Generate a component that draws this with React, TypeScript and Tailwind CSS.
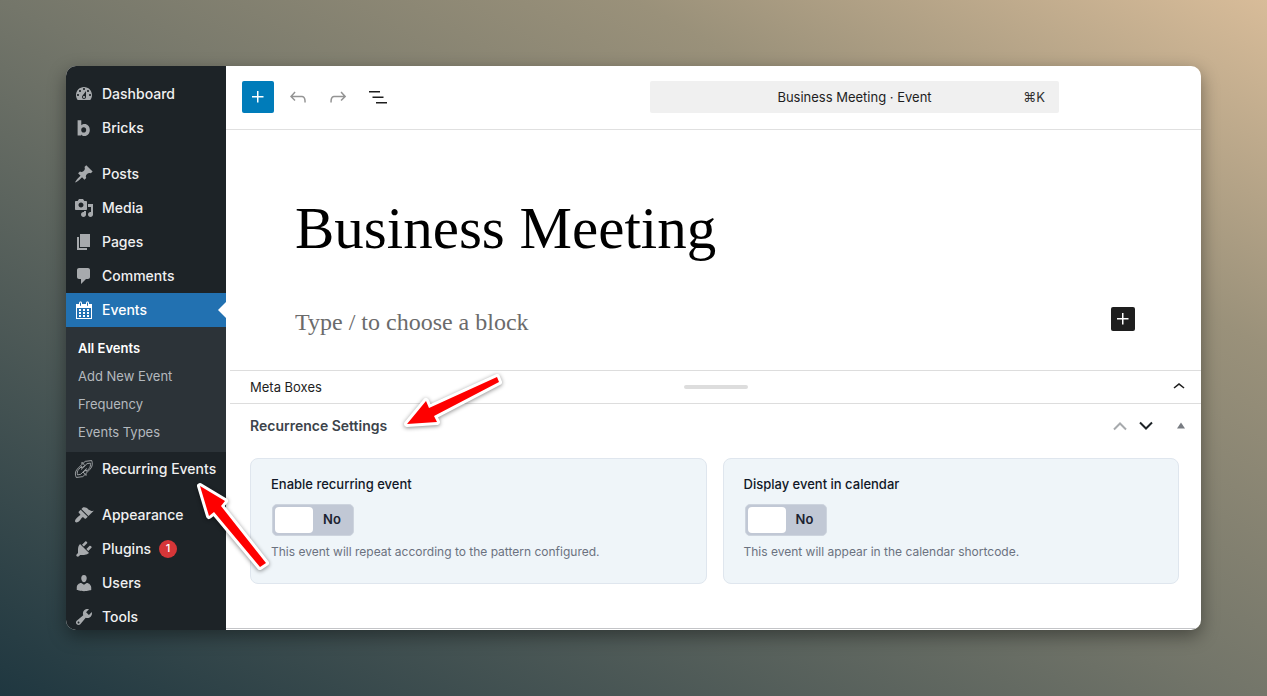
import React, { useState } from 'react';

const ICONS = {
  dashboard:
    'M3.76 16h12.48c1.1-1.37 1.76-3.11 1.76-5 0-4.42-3.58-8-8-8s-8 3.58-8 8c0 1.89.66 3.63 1.76 5zM10 4c.55 0 1 .45 1 1s-.45 1-1 1-1-.45-1-1 .45-1 1-1zM6 6c.55 0 1 .45 1 1s-.45 1-1 1-1-.45-1-1 .45-1 1-1zm8 0c.55 0 1 .45 1 1s-.45 1-1 1-1-.45-1-1 .45-1 1-1zm-5.37 5.55L12 7v6c0 1.1-.9 2-2 2s-2-.9-2-2c0-.57.24-1.08.63-1.45zM4 10c.55 0 1 .45 1 1s-.45 1-1 1-1-.45-1-1 .45-1 1-1zm12 0c.55 0 1 .45 1 1s-.45 1-1 1-1-.45-1-1 .45-1 1-1zm-5 3c0-.55-.45-1-1-1s-1 .45-1 1 .45 1 1 1 1-.45 1-1z',
  bricks:
    'M3.6 2.2h3.7v5.1c.9-.9 2-1.3 3.2-1.3 3.1 0 5.3 2.5 5.3 5.9s-2.2 6-5.3 6c-1.3 0-2.5-.5-3.4-1.5v1.2H3.6zM9.7 9.3c-1.4 0-2.5 1.1-2.5 2.6s1.1 2.7 2.5 2.7 2.5-1.2 2.5-2.7-1.1-2.6-2.5-2.6z',
  posts:
    'M10.44 3.02l1.82-1.82 6.36 6.35-1.83 1.82c-1.05-.68-2.48-.57-3.41.36l-.75.75c-.92.93-1.04 2.35-.35 3.41l-1.83 1.82-2.41-2.41-2.8 2.79c-.42.42-3.38 2.71-3.8 2.29s1.86-3.39 2.28-3.81l2.79-2.79L4.1 9.36l1.83-1.82c1.05.69 2.48.57 3.4-.36l.75-.75c.93-.92 1.05-2.35.36-3.41z',
  media:
    'M13 11V4c0-.55-.45-1-1-1h-1.67L9 1H5L3.67 3H2c-.55 0-1 .45-1 1v7c0 .55.45 1 1 1h10c.55 0 1-.45 1-1zM7 4.5c1.38 0 2.5 1.12 2.5 2.5S8.38 9.5 7 9.5 4.5 8.38 4.5 7 5.62 4.5 7 4.5zM14 6h5v10.5c0 1.38-1.12 2.5-2.5 2.5S14 17.88 14 16.5s1.12-2.5 2.5-2.5c.17 0 .34.02.5.05V9h-3V6zm-4 8.05V13h2v3.5c0 1.38-1.12 2.5-2.5 2.5S7 17.88 7 16.5 8.12 14 9.5 14c.17 0 .34.02.5.05z',
  pages: 'M6 15V2h10v13H6zm-1 1h8v2H3V5h2v11z',
  comments:
    'M5 2h9c1.1 0 2 .9 2 2v7c0 1.1-.9 2-2 2h-2l-5 5v-5H5c-1.1 0-2-.9-2-2V4c0-1.1.9-2 2-2z',
  events:
    'M15 4h3v15H2V4h3V3c0-.41.15-.76.44-1.06.29-.29.65-.44 1.06-.44s.77.15 1.06.44c.29.3.44.65.44 1.06v1h4V3c0-.41.15-.76.44-1.06.29-.29.65-.44 1.06-.44s.77.15 1.06.44c.29.3.44.65.44 1.06v1zM6 3v2.5c0 .14.05.26.15.36.09.09.21.14.35.14s.26-.05.35-.14c.1-.1.15-.22.15-.36V3c0-.14-.05-.26-.15-.35-.09-.1-.21-.15-.35-.15s-.26.05-.35.15c-.1.09-.15.21-.15.35zm7 0v2.5c0 .14.05.26.14.36.1.09.22.14.36.14s.26-.05.36-.14c.09-.1.14-.22.14-.36V3c0-.14-.05-.26-.14-.35-.1-.1-.22-.15-.36-.15s-.26.05-.36.15c-.09.09-.14.21-.14.35zm4 15V8H3v10h14zM7 9v2H5V9h2zm2 0h2v2H9V9zm4 2V9h2v2h-2zm-6 1v2H5v-2h2zm2 0h2v2H9v-2zm4 2v-2h2v2h-2zm-6 1v2H5v-2h2zm4 2H9v-2h2v2zm4 0h-2v-2h2v2z',
  appearance:
    'M14.48 11.06L7.41 3.99l1.5-1.5c.5-.56 2.3-.47 3.51.32 1.21.8 1.43 1.28 2.91 2.1 1.18.64 2.45 1.26 4.45.85zm-.71.71L6.7 4.7 4.93 6.47c-.39.39-.39 1.02 0 1.41l1.06 1.06c.39.39.39 1.03 0 1.42-.6.6-1.43 1.11-2.21 1.69-.35.26-.7.53-1.01.84C1.43 14.23.4 16.08 1.4 17.07c.99 1 2.84-.03 4.18-1.36.31-.31.58-.66.85-1.02.57-.78 1.08-1.61 1.69-2.21.39-.39 1.02-.39 1.41 0l1.06 1.06c.39.39 1.02.39 1.41 0z',
  plugins:
    'M13.11 4.36L9.87 7.6 8 5.73l3.24-3.24c.35-.34 1.05-.2 1.56.32.52.51.66 1.21.31 1.55zm-8 1.77l.91-1.12 9.01 9.01-1.19.84c-.71.71-2.63 1.16-3.82 1.16H6.14L4.9 17.26c-.59.59-1.54.59-2.12 0-.59-.58-.59-1.53 0-2.12l1.24-1.24v-3.88c0-1.13.4-3.19 1.09-3.89zm7.26 3.97l3.24-3.24c.34-.35 1.04-.21 1.55.31.52.51.66 1.21.31 1.55l-3.24 3.25z',
  users:
    'M10 9.25c-2.27 0-2.73-3.44-2.73-3.44C7 4.02 7.82 2 9.97 2c2.16 0 2.98 2.02 2.71 3.81 0 0-.41 3.44-2.68 3.44zm0 2.57L12.72 10c2.39 0 4.52 2.33 4.52 4.53v2.49s-3.65 1.13-7.24 1.13c-3.65 0-7.24-1.13-7.24-1.13v-2.49c0-2.25 1.94-4.48 4.47-4.48z',
  tools:
    'M16.68 9.77c-1.34 1.34-3.3 1.67-4.95.99l-5.41 6.52c-.99.99-2.59.99-3.58 0s-.99-2.59 0-3.57l6.52-5.42c-.68-1.65-.35-3.61.99-4.95 1.28-1.28 3.12-1.62 4.72-1.06l-2.89 2.89 2.82 2.82 2.86-2.87c.53 1.58.18 3.39-1.08 4.65zM3.81 16.21c.4.39 1.04.39 1.43 0 .4-.4.4-1.04 0-1.43-.39-.4-1.03-.4-1.43 0-.39.39-.39 1.03 0 1.43z',
};

type IconName = keyof typeof ICONS;

interface MenuItemProps {
  label: string;
  icon?: IconName;
  active?: boolean;
  badge?: number;
}

function MenuItem({ label, icon, active, badge }: MenuItemProps) {
  return (
    <li>
      <a
        href="#"
        className={`relative flex h-[34px] items-center gap-2 px-2 text-sm font-medium whitespace-nowrap ${
          active ? 'bg-[#2271b1] text-white' : 'text-[#f0f0f1]'
        }`}
      >
        {icon ? (
          <svg
            viewBox="0 0 20 20"
            fillRule="evenodd"
            className={`size-5 shrink-0 ${active ? 'fill-white' : 'fill-[#a7aaad]'}`}
          >
            <path d={ICONS[icon]} />
          </svg>
        ) : (
          <RecurringIcon />
        )}
        {label}
        {badge && (
          <span className="flex size-[18px] items-center justify-center rounded-full bg-[#d63638] text-[11px] text-white">
            {badge}
          </span>
        )}
        {active && (
          <span className="absolute top-1/2 right-0 -translate-y-1/2 border-y-8 border-r-8 border-y-transparent border-r-white" />
        )}
      </a>
    </li>
  );
}

function RecurringIcon() {
  return (
    <svg viewBox="0 0 20 20" className="size-5 shrink-0 fill-none stroke-[#a7aaad]" strokeWidth="0.9" strokeLinejoin="round">
      <path d="M11.2 2.4 17.7 1.5c1 2.7.9 6.1-1.5 8.6l-4 4.1-.2 2.3-2.9-3.5 3.4-2.1-.1 1.5 2.4-2.5c1.5-1.7 2-3.6 1.5-5.8l-3.3.6-6 5.9" />
      <path d="M8.8 17.6 2.3 18.5c-1.5-3-1.2-6.1 1-8.4l4.5-4.6.2-2.3 2.9 3.5-3.4 2.3.1-1.7-3 3.2c-1.3 1.5-1.6 3.3-1.1 5.4l3.2-.6 5.9-6" />
      <path d="M11.2 2.4 8.4 5M8.800 17.600l2.800-2.600" />
    </svg>
  );
}

const SUBMENU = ['All Events', 'Add New Event', 'Frequency', 'Events Types'];

function Sidebar() {
  return (
    <nav className="w-40 shrink-0 overflow-hidden bg-[#1d2327] pt-[11px]">
      <ul>
        <MenuItem icon="dashboard" label="Dashboard" />
        <MenuItem icon="bricks" label="Bricks" />
      </ul>
      <ul className="mt-3">
        <MenuItem icon="posts" label="Posts" />
        <MenuItem icon="media" label="Media" />
        <MenuItem icon="pages" label="Pages" />
        <MenuItem icon="comments" label="Comments" />
        <MenuItem icon="events" label="Events" active />
        <li>
          <ul className="bg-[#2c3338] pt-2 pb-[5px]">
            {SUBMENU.map((item, i) => (
              <li key={item}>
                <a
                  href="#"
                  className={`flex h-7 items-center px-3 text-[13px] ${
                    i === 0 ? 'font-semibold text-white' : 'text-[#b4b9be]'
                  }`}
                >
                  {item}
                </a>
              </li>
            ))}
          </ul>
        </li>
        <MenuItem label="Recurring Events" />
      </ul>
      <ul className="mt-3">
        <MenuItem icon="appearance" label="Appearance" />
        <MenuItem icon="plugins" label="Plugins" badge={1} />
        <MenuItem icon="users" label="Users" />
        <MenuItem icon="tools" label="Tools" />
      </ul>
    </nav>
  );
}

function ToolbarIcon({ d }: { d: string }) {
  return (
    <svg viewBox="0 0 24 24" className="size-6 fill-current">
      <path d={d} />
    </svg>
  );
}

const PLUS = 'M11 12.5V17.5H12.5V12.5H17.5V11H12.5V6H11V11H6V12.5H11Z';

function EditorHeader() {
  return (
    <header className="flex h-16 shrink-0 items-center gap-2 border-b border-[#e0e0e0] pr-[142px] pb-px pl-4">
      <button aria-label="Add block" className="flex size-8 items-center justify-center rounded-xs bg-[#007cba] text-white">
        <ToolbarIcon d={PLUS} />
      </button>
      <button aria-label="Undo" className="flex size-8 items-center justify-center text-[#949494]">
        <ToolbarIcon d="M18.3 11.7c-.6-.6-1.4-.9-2.3-.9H6.7l2.9-3.3-1.1-1-4.5 5L8.5 16l1-1-2.7-2.7H16c.5 0 .9.2 1.3.5 1 1 1 3.4 1 4.5v.3h1.5v-.2c0-1.5 0-4.3-1.5-5.7z" />
      </button>
      <button aria-label="Redo" className="flex size-8 items-center justify-center text-[#949494]">
        <ToolbarIcon d="M15.6 6.5l-1.1 1 2.9 3.3H8c-.9 0-1.7.3-2.3.9-1.4 1.5-1.4 4.2-1.4 5.6v.2h1.5v-.3c0-1.1 0-3.5 1-4.5.3-.3.7-.5 1.3-.5h9.2L14.5 15l1.1 1.1 4.6-4.6-4.6-5z" />
      </button>
      <button aria-label="Document overview" className="flex size-8 items-center justify-center text-[#1e1e1e]">
        <ToolbarIcon d="M3 6h11v1.5H3V6Zm3.5 5.5h11V13h-11v-1.5ZM21 17H10v1.5h11V17Z" />
      </button>
      <button className="ml-auto grid h-8 w-full max-w-[409px] grid-cols-[1fr_auto_1fr] items-center rounded-xs bg-[#f0f0f0] px-3.5 pt-0.5 text-[13px] text-[#1e1e1e]">
        <span className="col-start-2">Business Meeting · Event</span>
        <span className="text-right text-[#2f2f2f]">⌘K</span>
      </button>
    </header>
  );
}

function SettingCard({ id, label, description }: { id: string; label: string; description: string }) {
  const [on, setOn] = useState(false);

  return (
    <div className="flex flex-1 flex-col items-start rounded-lg border border-[#dfe6ee] bg-[#eff5f9] px-5 pt-4 pb-[21px]">
      <label htmlFor={id} className="text-[13px] leading-[18px] font-medium text-[#111827]">
        {label}
      </label>
      <label
        className={`relative mt-[11px] ml-px flex h-8 w-[82px] cursor-pointer items-center rounded-[5px] border border-[#cdd4de] bg-[#c1c8d5] p-0.5 ${
          on ? 'flex-row-reverse' : ''
        }`}
      >
        <input id={id} type="checkbox" role="switch" className="sr-only" checked={on} onChange={() => setOn(!on)} />
        <span className="h-[26px] w-[38px] rounded-sm bg-white" />
        <span className="flex-1 text-center text-[13px] font-semibold text-[#1b2230]">{on ? 'Yes' : 'No'}</span>
      </label>
      <p className="mt-1.5 text-xs leading-5 text-[#6b7280]">{description}</p>
    </div>
  );
}

function MetaBoxes() {
  return (
    <section className="flex flex-1 flex-col">
      <button className="ml-1 flex h-[34px] shrink-0 items-center border-y border-[#dddddd] px-2.5 text-[13px] text-[#1e1e1e]">
        <span className="flex-1 pt-0.5 pl-2.5 text-left">Meta Boxes</span>
        <span className="h-1 w-16 rounded-full bg-[#dddddd]" />
        <span className="flex flex-1 justify-end pl-2.5">
          <ToolbarIcon d="M6.5 12.4L12 8l5.5 4.4-.9 1.2L12 10l-4.5 3.6-1-1.2z" />
        </span>
      </button>

      <div className="flex h-11 shrink-0 items-center justify-between pr-3.5 pl-6">
        <h2 className="text-sm font-semibold text-[#3c434a]">Recurrence Settings</h2>
        <div className="flex items-center">
          <button aria-label="Move up" className="flex w-[26px] justify-center">
            <svg viewBox="0 0 14 14" className="size-3.5 fill-none stroke-[#a7aaad]" strokeWidth="2">
              <path d="M1 10.5 7 4.5l6 6" />
            </svg>
          </button>
          <button aria-label="Move down" className="flex w-[26px] justify-center">
            <svg viewBox="0 0 14 14" className="size-3.5 fill-none stroke-[#1d2327]" strokeWidth="2">
              <path d="M1 3.5l6 6 6-6" />
            </svg>
          </button>
          <button aria-label="Toggle panel" className="ml-4 flex w-3 justify-center">
            <svg viewBox="0 0 8 8" className="size-2 fill-[#787c82]">
              <path d="M0 6.5h8L4 .5z" />
            </svg>
          </button>
        </div>
      </div>

      <div className="mt-2.5 flex gap-4 pr-[22px] pl-6">
        <SettingCard
          id="recurring"
          label="Enable recurring event"
          description="This event will repeat according to the pattern configured."
        />
        <SettingCard
          id="calendar"
          label="Display event in calendar"
          description="This event will appear in the calendar shortcode."
        />
      </div>

      <div className="mt-auto mb-px border-t border-[#c3c4c7]" />
    </section>
  );
}

// Red annotation arrow with a white outline
function Arrow({ points, className }: { points: string; className: string }) {
  return (
    <svg className={`pointer-events-none absolute overflow-visible drop-shadow-[0_1px_2px_rgba(0,0,0,0.45)] ${className}`}>
      <polygon points={points} fill="#fe0000" stroke="#ffffff" strokeWidth="6" strokeLinejoin="round" paintOrder="stroke" />
    </svg>
  );
}

export default function App() {
  return (
    <div className="flex h-screen bg-[linear-gradient(to_top_right,#1f3740_0%,#74766a_50%,#9a917a_75%,#d8bc99_100%)] p-[66px] font-['Inter',sans-serif]">
      <div className="relative flex min-w-0 flex-1 rounded-[10px] shadow-[0_6px_18px_rgba(0,0,0,0.4)]">
        <div className="flex min-w-0 flex-1 overflow-hidden rounded-[10px] bg-white">
          <Sidebar />
          <main className="flex min-w-0 flex-1 flex-col">
            <EditorHeader />
            <div className="h-60 shrink-0 pt-[62px] pr-[66px] pl-[69px] font-['Liberation_Serif',serif]">
              <h1 className="text-[59px] leading-[72px] text-black">Business Meeting</h1>
              <div className="mt-[42px] flex items-start">
                <input
                  aria-label="Block content"
                  placeholder="Type / to choose a block"
                  className="h-8 min-w-0 flex-1 text-2xl outline-none placeholder:text-[#6b6b6b]"
                />
                <button aria-label="Insert block" className="mt-px flex size-6 items-center justify-center rounded-xs bg-[#1e1e1e] text-white">
                  <ToolbarIcon d={PLUS} />
                </button>
              </div>
            </div>
            <MetaBoxes />
          </main>
        </div>

        <Arrow className="top-[310px] left-[340px] h-12 w-24" points="1,48 20,25 23,32 91,1 93,6 28,40 31,46" />
        <Arrow className="top-[418px] left-[132px] h-21 w-17" points="2,2 27,17 23,22 68,79 62,83 16,28 11,32" />
      </div>
    </div>
  );
}
